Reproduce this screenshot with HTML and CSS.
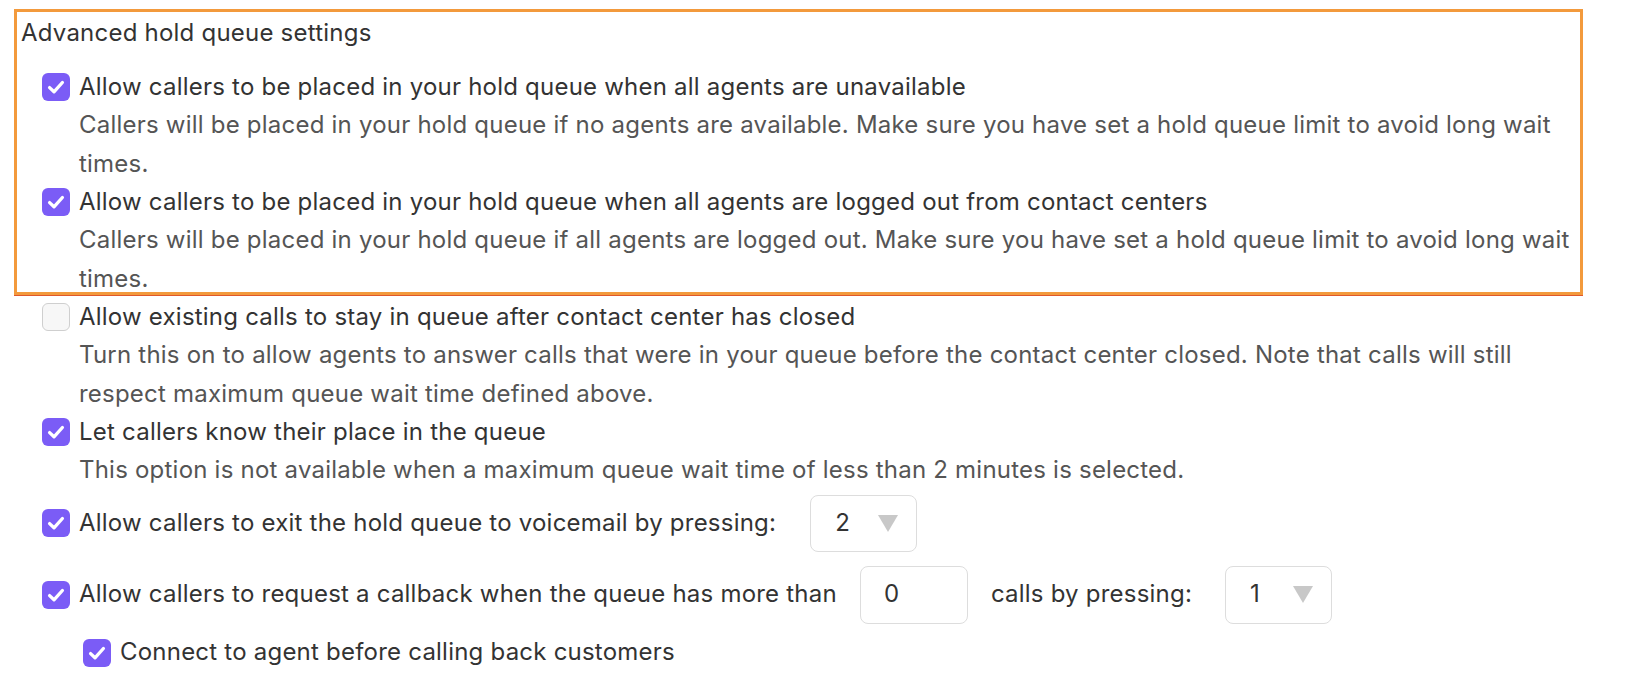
FILE: index.html
```html
<!DOCTYPE html>
<html lang="en">
<head>
<meta charset="utf-8">
<title>Advanced hold queue settings</title>
<link rel="stylesheet" href="styles.css">
</head>
<body>
<div class="page">
  <h2 class="heading">Advanced hold queue settings</h2>
  <div class="options">
    <div class="option">
      <span class="cb checked"><svg viewBox="0 0 28 28" width="28" height="28"><path d="M7.6 14.6 L12 18.8 L20.4 9.5" fill="none" stroke="#fff" stroke-width="3.3" stroke-linecap="round" stroke-linejoin="round"/></svg></span>
      <div class="option-body">
        <div class="label">Allow callers to be placed in your hold queue when all agents are unavailable</div>
        <div class="desc">Callers will be placed in your hold queue if no agents are available. Make sure you have set a hold queue limit to avoid long wait times.</div>
      </div>
    </div>
    <div class="option">
      <span class="cb checked"><svg viewBox="0 0 28 28" width="28" height="28"><path d="M7.6 14.6 L12 18.8 L20.4 9.5" fill="none" stroke="#fff" stroke-width="3.3" stroke-linecap="round" stroke-linejoin="round"/></svg></span>
      <div class="option-body">
        <div class="label">Allow callers to be placed in your hold queue when all agents are logged out from contact centers</div>
        <div class="desc">Callers will be placed in your hold queue if all agents are logged out. Make sure you have set a hold queue limit to avoid long wait times.</div>
      </div>
    </div>
    <div class="option">
      <span class="cb"></span>
      <div class="option-body">
        <div class="label">Allow existing calls to stay in queue after contact center has closed</div>
        <div class="desc">Turn this on to allow agents to answer calls that were in your queue before the contact center closed. Note that calls will still respect maximum queue wait time defined above.</div>
      </div>
    </div>
    <div class="option">
      <span class="cb checked"><svg viewBox="0 0 28 28" width="28" height="28"><path d="M7.6 14.6 L12 18.8 L20.4 9.5" fill="none" stroke="#fff" stroke-width="3.3" stroke-linecap="round" stroke-linejoin="round"/></svg></span>
      <div class="option-body">
        <div class="label">Let callers know their place in the queue</div>
        <div class="desc">This option is not available when a maximum queue wait time of less than 2 minutes is selected.</div>
      </div>
    </div>
    <div class="inline-option voicemail">
      <span class="cb checked"><svg viewBox="0 0 28 28" width="28" height="28"><path d="M7.6 14.6 L12 18.8 L20.4 9.5" fill="none" stroke="#fff" stroke-width="3.3" stroke-linecap="round" stroke-linejoin="round"/></svg></span>
      <span class="label">Allow callers to exit the hold queue to voicemail by pressing:</span>
      <div class="select select-vm"><span>2</span><span class="caret"></span></div>
    </div>
    <div class="inline-option callback">
      <span class="cb checked"><svg viewBox="0 0 28 28" width="28" height="28"><path d="M7.6 14.6 L12 18.8 L20.4 9.5" fill="none" stroke="#fff" stroke-width="3.3" stroke-linecap="round" stroke-linejoin="round"/></svg></span>
      <span class="label">Allow callers to request a callback when the queue has more than</span>
      <div class="text-input">0</div>
      <span class="label calls-label">calls by pressing:</span>
      <div class="select select-cb"><span>1</span><span class="caret"></span></div>
    </div>
    <div class="inline-option connect">
      <span class="cb checked"><svg viewBox="0 0 28 28" width="28" height="28"><path d="M7.6 14.6 L12 18.8 L20.4 9.5" fill="none" stroke="#fff" stroke-width="3.3" stroke-linecap="round" stroke-linejoin="round"/></svg></span>
      <span class="label">Connect to agent before calling back customers</span>
    </div>
  </div>
  <div class="highlight"></div>
</div>
</body>
</html>
```
FILE: styles.css
```css
html, body {
  margin: 0;
  background: #ffffff;
}
body {
  font-family: Inter, "Noto Sans", "Liberation Sans", sans-serif;
  font-size: 24px;
  letter-spacing: 0.22px;
  line-height: 38.33px;
  color: #333333;
}
.page {
  position: relative;
  box-sizing: border-box;
  height: 688px;
  padding: 14px 45px 0 21px;
}
.heading {
  margin: 0 0 16px;
  font-size: 24px;
  font-weight: 400;
  line-height: 38px;
  color: #333333;
}
.options {
  padding-left: 21px;
}
.option {
  display: grid;
  grid-template-columns: 28px 1fr;
  column-gap: 9px;
}
.cb {
  box-sizing: border-box;
  width: 28px;
  height: 28px;
  border-radius: 6px;
  border: 1px solid #cfcfcf;
  background: #f7f7f7;
  margin-top: 5px;
  flex: none;
  display: block;
}
.cb.checked {
  background: #7b5cf6;
  border: none;
}
.cb svg {
  display: block;
}
.desc {
  color: #555555;
}
.inline-option {
  display: flex;
  align-items: center;
}
.inline-option .cb {
  margin-top: 0;
  margin-right: 9px;
}
.voicemail {
  height: 57px;
  margin-top: 5px;
}
.callback {
  height: 58px;
  margin-top: 14px;
}
.connect {
  height: 38px;
  margin-top: 10px;
  padding-left: 41px;
}
.select {
  box-sizing: border-box;
  width: 107px;
  height: 57px;
  border: 1px solid #dddddd;
  border-radius: 8px;
  display: flex;
  align-items: center;
  justify-content: space-between;
  padding: 0 18px 0 24px;
  color: #333333;
}
.select-vm {
  margin-left: 34px;
}
.select-cb {
  margin-left: 33px;
  height: 58px;
}
.caret {
  width: 0;
  height: 0;
  border-left: 10px solid transparent;
  border-right: 10px solid transparent;
  border-top: 17px solid #c8c8c8;
}
.text-input {
  box-sizing: border-box;
  width: 108px;
  height: 58px;
  border: 1px solid #dddddd;
  border-radius: 8px;
  padding-left: 23px;
  display: flex;
  align-items: center;
  margin-left: 23px;
  color: #333333;
}
.calls-label {
  margin-left: 23px;
}
.highlight {
  position: absolute;
  left: 14px;
  top: 9px;
  width: 1569px;
  height: 286px;
  box-sizing: border-box;
  border: 3px solid #f39a3c;
  box-shadow: 0 1px 0 #e0582b;
  pointer-events: none;
}
```
